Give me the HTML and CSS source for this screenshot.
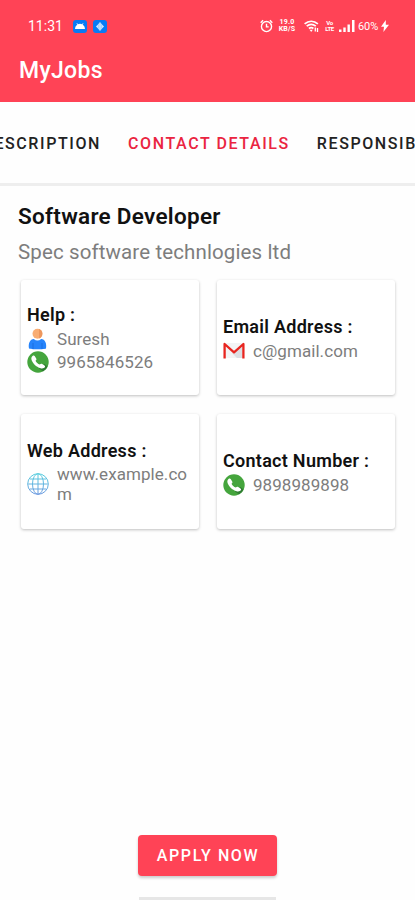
FILE: index.html
```
<!DOCTYPE html>
<html lang="en">
<head>
<meta charset="utf-8">
<title>MyJobs</title>
<link rel="stylesheet" href="styles.css">
</head>
<body>
<svg class="defs" aria-hidden="true">
  <symbol id="phone" viewBox="0 0 22 22">
    <circle cx="11" cy="11" r="10.700" fill="#45a53d"/>
    <path d="M12 17.500l4 3a10.500 10.500 0 0 0 4.500-5L17.500 13z" fill="#2f7d32"/>
    <path d="M4.600 6.200C5.400 4.600 6.800 3.900 7.700 5.100l1.500 2.300c.6 1 .1 1.600-.7 2.300.9 1.900 2.300 3.100 4.300 3.900.8-.9 1.500-1.200 2.400-.6l2.300 1.500c1.100.8.6 1.900-.6 2.600-1.600.9-3.700.5-6.100-1C8.300 14.600 6.100 12.400 5 9.900c-.6-1.500-.9-2.600-.4-3.700z" fill="#fff"/>
  </symbol>
</svg>
<div class="screen">
  <header class="header">
    <div class="status">
      <span class="clock">11:31</span>
      <svg class="app-icon" viewBox="0 0 14 13"><rect width="14" height="13" rx="3" fill="#087bf5"/><path d="M2 9c.2-2.200 1-3.500 2.300-4.300L3.500 3.300l.5-.3.900 1.300a5.500 5.500 0 0 1 4.200 0L10 3l.5.300-.8 1.400C11 5.500 11.800 6.800 12 9z" fill="#fff"/></svg>
      <svg class="app-icon app-icon-last" viewBox="0 0 14 13"><rect width="14" height="13" rx="3" fill="#087bf5"/><path d="M7 2l2 2.500L11 6.500 9 8.500 7 11 5 8.500 3 6.500l2-2z" fill="#d9ecff"/><path d="M7 2v9M5.300 4.500v4M8.700 4.500v4" stroke="#5aa8fa" stroke-width=".5"/></svg>
      <svg class="alarm" viewBox="0 0 12 13" fill="none" stroke="#fff" stroke-width="1.300"><circle cx="6" cy="7" r="4.700"/><path d="M.6 3.400L2.800 1.200M11.400 3.400L9.200 1.200M6 4.500V7.300H8"/></svg>
      <span class="speed"><span>19.0</span><span>KB/S</span></span>
      <svg class="wifi" viewBox="0 0 15 13" fill="none" stroke="#fff" stroke-width="1.700"><path d="M.6 3.800c4-3.300 9.300-3.300 13.300 0M2.700 6.200c2.700-2.300 6.400-2.300 9.100 0M4.900 8.500c1.500-1.200 3.100-1.200 4.500 0"/><path d="M7.200 12L5.600 9.700h3.200z" fill="#fff" stroke="none"/><path d="M11.300 7.500v4M13.500 8v4" stroke-width="1.300"/></svg>
      <span class="volte"><span>Vo</span><span>LTE</span></span>
      <svg class="signal" viewBox="0 0 16 12" fill="#fff"><path d="M0 9.500h2.500V12H0zM4.300 7.500h2.400V12H4.300zM8.500 4.500h2.400V12H8.500zM13 0h2.500v12H13z"/></svg>
      <span class="battery">60%</span>
      <svg class="bolt" viewBox="0 0 8 12" fill="#fff"><path d="M4.800 0L0 6.800h3L2.400 12 8 4.700H4.800z"/></svg>
    </div>
    <h1 class="app-title">MyJobs</h1>
  </header>

  <nav class="tabs">
    <span class="tab">DESCRIPTION</span>
    <span class="tab tab-active">CONTACT DETAILS</span>
    <span class="tab">RESPONSIBILITIES</span>
  </nav>

  <main class="content">
    <h2 class="job">Software Developer</h2>
    <p class="company">Spec software technlogies ltd</p>
    <div class="cards">
      <section class="card card-help">
        <h3 class="label">Help :</h3>
        <div class="row">
          <svg class="icon" viewBox="0 0 22 22"><circle cx="10.500" cy="5.800" r="5" fill="#f8ad74"/><path d="M12 1.100a5 5 0 0 1 0 9.400z" fill="#ed975e"/><path d="M2 20.500c-1-5 1-9.300 4.800-9.500 2.300 2 5 2 7.400 0 3.800.2 5.800 4.500 4.800 9.500-1 1-16 1-17 0z" fill="#2684fb"/><path d="M6 15v6M15 15v6" stroke="#1769dc" stroke-width=".8"/></svg>
          <span>Suresh</span>
        </div>
        <div class="row">
          <svg class="icon"><use href="#phone"/></svg>
          <span>9965846526</span>
        </div>
      </section>
      <section class="card card-email">
        <h3 class="label">Email Address :</h3>
        <div class="row">
          <svg class="icon" viewBox="0 0 22 22"><path d="M2 3h18v15H2z" fill="#f3f4f5"/><path d="M11 12l8-7v13h-5l-5-5z" fill="#dcdfe3"/><path d="M1.600 18.500V4l9.400 8.300L20.400 4v14.500" fill="none" stroke="#e8251f" stroke-width="2.300" stroke-linejoin="round"/></svg>
          <span>c@gmail.com</span>
        </div>
      </section>
      <section class="card card-web">
        <h3 class="label">Web Address :</h3>
        <div class="row">
          <svg class="icon" viewBox="0 0 22 22" fill="none" stroke="url(#globe)" stroke-width="1"><defs><linearGradient id="globe" gradientUnits="userSpaceOnUse" x1="0" y1="0" x2="0" y2="22"><stop stop-color="#58d0de"/><stop offset="1" stop-color="#6c98e0"/></linearGradient></defs><circle cx="11" cy="11" r="10.300"/><ellipse cx="11" cy="11" rx="5.500" ry="10.300"/><path d="M11 1v20M1.200 11.010h19.600M3 6h16M3 16h16"/></svg>
          <span>www.example.com</span>
        </div>
      </section>
      <section class="card card-number">
        <h3 class="label">Contact Number :</h3>
        <div class="row">
          <svg class="icon"><use href="#phone"/></svg>
          <span>9898989898</span>
        </div>
      </section>
    </div>
  </main>

  <footer class="footer">
    <button class="apply">APPLY NOW</button>
    <div class="handle"></div>
  </footer>
</div>
</body>
</html>
```

FILE: styles.css
```
* { box-sizing: border-box; }
body { margin: 0; background: #fff; font-family: Roboto, sans-serif; }
h1, h2, h3, p { margin: 0; }
svg { display: block; flex: none; }
.defs { display: none; }
.screen { width: 415px; height: 900px; overflow: hidden; display: flex; flex-direction: column; background: #fefefe; }

.header { height: 102px; flex: none; background: #ff4356; color: #fff; padding-top: 16px; }
.status { display: flex; align-items: center; height: 20px; padding-left: 28px; white-space: nowrap; }
.clock { width: 45px; font-size: 14px; }
.app-icon { width: 14px; height: 13px; }
.app-icon-last { margin-left: 6px; margin-right: 153px; }
.alarm { width: 13px; height: 14px; }
.speed, .volte { display: flex; flex-direction: column; align-items: center; font-weight: 700; }
.speed { width: 18px; margin-left: 5px; font-size: 7px; line-height: 7px; letter-spacing: .2px; }
.wifi { width: 15px; height: 13px; margin-left: 8px; }
.volte { width: 9px; margin-left: 6px; font-size: 6px; line-height: 6px; letter-spacing: -.4px; }
.signal { width: 16px; height: 12px; margin-left: 5px; }
.battery { width: 22px; margin-left: 3px; font-size: 11px; letter-spacing: -.1px; }
.bolt { width: 8px; height: 12px; margin-left: 1px; }
.app-title { margin: 20px 0 0 19px; font-size: 23px; line-height: 30px; font-weight: 500; letter-spacing: .3px; }

.tabs { height: 84px; flex: none; display: flex; align-items: center; justify-content: center; gap: 27px; padding: 1px 0 0 46px; border-bottom: 3px solid #eee; white-space: nowrap; margin: 0 -100px; }
.tab { font-size: 16px; font-weight: 500; letter-spacing: 1.600px; color: #222; }
.tab-active { color: #ea2440; }

.content { flex: 1; padding: 17px 20px 0 21px; }
.job { margin-left: -3px; font-size: 22.500px; line-height: 27px; padding-bottom: 1px; font-weight: 600; letter-spacing: .280px; color: #111; }
.company { margin-left: -3px; margin-top: 8px; font-size: 20.500px; line-height: 26px; letter-spacing: .120px; color: #7d7d7d; }
.cards { display: grid; grid-template-columns: 178px 178px; grid-auto-rows: 115px; gap: 19px 18px; margin-top: 15px; }
.card { display: flex; flex-direction: column; justify-content: center; padding: 2px 6px 0; border-radius: 3px; background: #fff; box-shadow: 0 1px 3px rgba(0, 0, 0, .25); }
.card-web { padding-top: 0; }
.label { font-size: 18px; line-height: 24px; font-weight: 600; letter-spacing: .280px; color: #111; }
.card-help .label { margin-top: -1px; padding-bottom: 1px; }
.card-web .label { padding-bottom: 1px; }
.row { display: flex; align-items: center; gap: 8px; font-size: 17px; line-height: 20px; letter-spacing: .070px; color: #7d7d7d; min-height: 23px; }
.row span { overflow-wrap: anywhere; }
.icon { width: 22px; height: 22px; }

.footer { flex: none; height: 65px; display: flex; flex-direction: column; align-items: center; justify-content: space-between; }
.apply { width: 139px; height: 41px; padding: 0 0 0 1px; border: 0; border-radius: 4px; background: #ff4356; color: #fff; font: 500 16px Roboto, sans-serif; letter-spacing: 1.600px; box-shadow: 0 2px 3px rgba(0, 0, 0, .2); }
.handle { width: 137px; height: 3px; background: #e6e6e6; }
```
